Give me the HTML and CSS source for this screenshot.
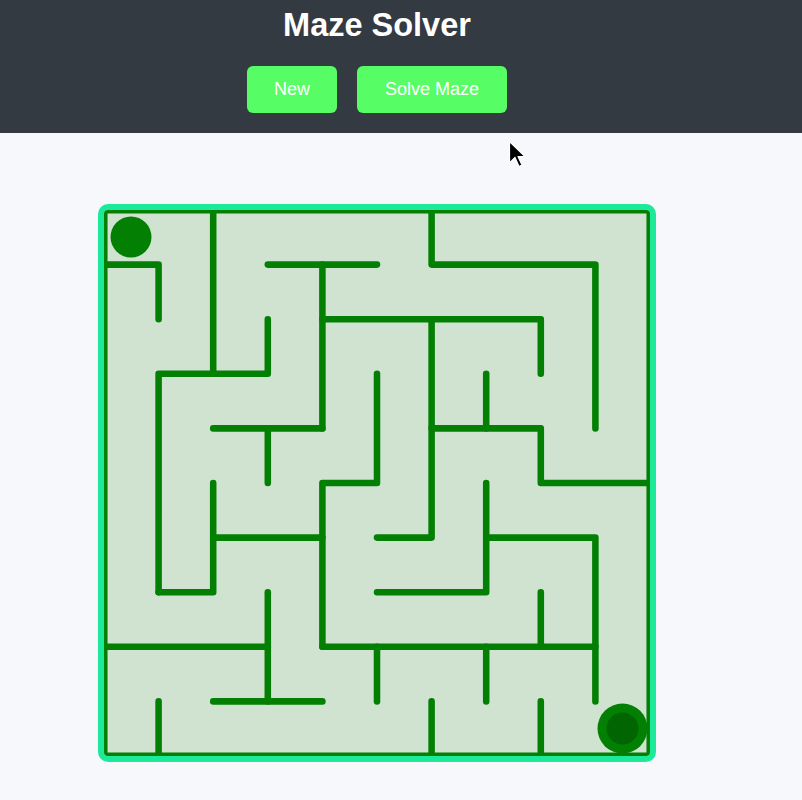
FILE: index.html
```
<!DOCTYPE html>
<html>
<head>
<meta charset="utf-8">
<title>Maze Solver</title>
<link rel="stylesheet" href="styles.css">
</head>
<body>
<header class="topbar">
  <h1 class="title">Maze Solver</h1>
  <div class="actions">
    <button class="btn btn-new">New</button>
    <button class="btn btn-solve">Solve Maze</button>
  </div>
</header>
<main class="stage">
  <div class="maze-frame">
    <svg class="maze" width="546" height="546" viewBox="0 0 546 546">
      <g transform="scale(54.6)" fill="none" stroke="#038003" stroke-width="0.12" stroke-linecap="round" stroke-linejoin="round">
        <rect x="0" y="0" width="10" height="10" stroke-width="0.13"/>
        <path d="M0 1 H1 V2"/>
        <path d="M2 0 V3"/>
        <path d="M1 7 V3 H3 V2"/>
        <path d="M3 1 H5"/>
        <path d="M4 1 V4"/>
        <path d="M2 4 H4"/>
        <path d="M3 4 V5"/>
        <path d="M4 2 H8 V3"/>
        <path d="M5 3 V5 H4 V8"/>
        <path d="M6 0 V1 H9 V4"/>
        <path d="M6 2 V6 H5"/>
        <path d="M7 3 V4"/>
        <path d="M6 4 H8 V5 H10"/>
        <path d="M1 7 H2 V5"/>
        <path d="M2 6 H4"/>
        <path d="M7 5 V7 H5"/>
        <path d="M7 6 H9 V9"/>
        <path d="M4 8 H9"/>
        <path d="M8 7 V8"/>
        <path d="M0 8 H3"/>
        <path d="M3 7 V9"/>
        <path d="M2 9 H4"/>
        <path d="M1 9 V10"/>
        <path d="M5 8 V9"/>
        <path d="M7 8 V9"/>
        <path d="M6 9 V10"/>
        <path d="M8 9 V10"/>
      </g>
      <circle cx="27" cy="27" r="20.5" fill="#038003"/>
      <circle cx="518.5" cy="518.5" r="25" fill="#038003"/>
      <circle cx="518.5" cy="518.5" r="16" fill="#016501"/>
    </svg>
  </div>
</main>
<svg class="cursor" width="20" height="30" viewBox="0 0 20 30">
  <path d="M1.5 1.5 L1.5 23 L7 17.5 L11 26.5 L14 25 L10 16.5 L17 16.5 Z" fill="#000" stroke="#fff" stroke-width="1.2" stroke-linejoin="round"/>
</svg>
</body>
</html>
```
FILE: styles.css
```
html, body {
  margin: 0;
  padding: 0;
}
body {
  background: #f7f8fb;
  font-family: "Liberation Sans", Arial, sans-serif;
  min-height: 800px;
  position: relative;
}
.topbar {
  background: #343a41;
  height: 133px;
  box-sizing: border-box;
  padding: 7px 48px 0 0;
  display: flex;
  flex-direction: column;
  align-items: center;
}
.title {
  margin: 0;
  color: #ffffff;
  font-size: 32.5px;
  line-height: 36px;
  font-weight: bold;
}
.actions {
  margin-top: 23px;
  display: flex;
  gap: 20px;
}
.btn {
  height: 47px;
  border: none;
  border-radius: 6px;
  background: #57fd64;
  color: #ffffff;
  font-family: "Liberation Sans", Arial, sans-serif;
  font-size: 18px;
  padding: 0;
  cursor: pointer;
}
.btn-new {
  width: 90px;
}
.btn-solve {
  width: 150px;
}
.stage {
  padding: 71px 0 0 98px;
}
.maze-frame {
  display: inline-block;
  border: 6px solid #1de99b;
  border-radius: 10px;
  background: #cfe3d0;
  line-height: 0;
  overflow: hidden;
}
.maze {
  display: block;
}
.cursor {
  position: absolute;
  left: 508px;
  top: 140px;
}
```
